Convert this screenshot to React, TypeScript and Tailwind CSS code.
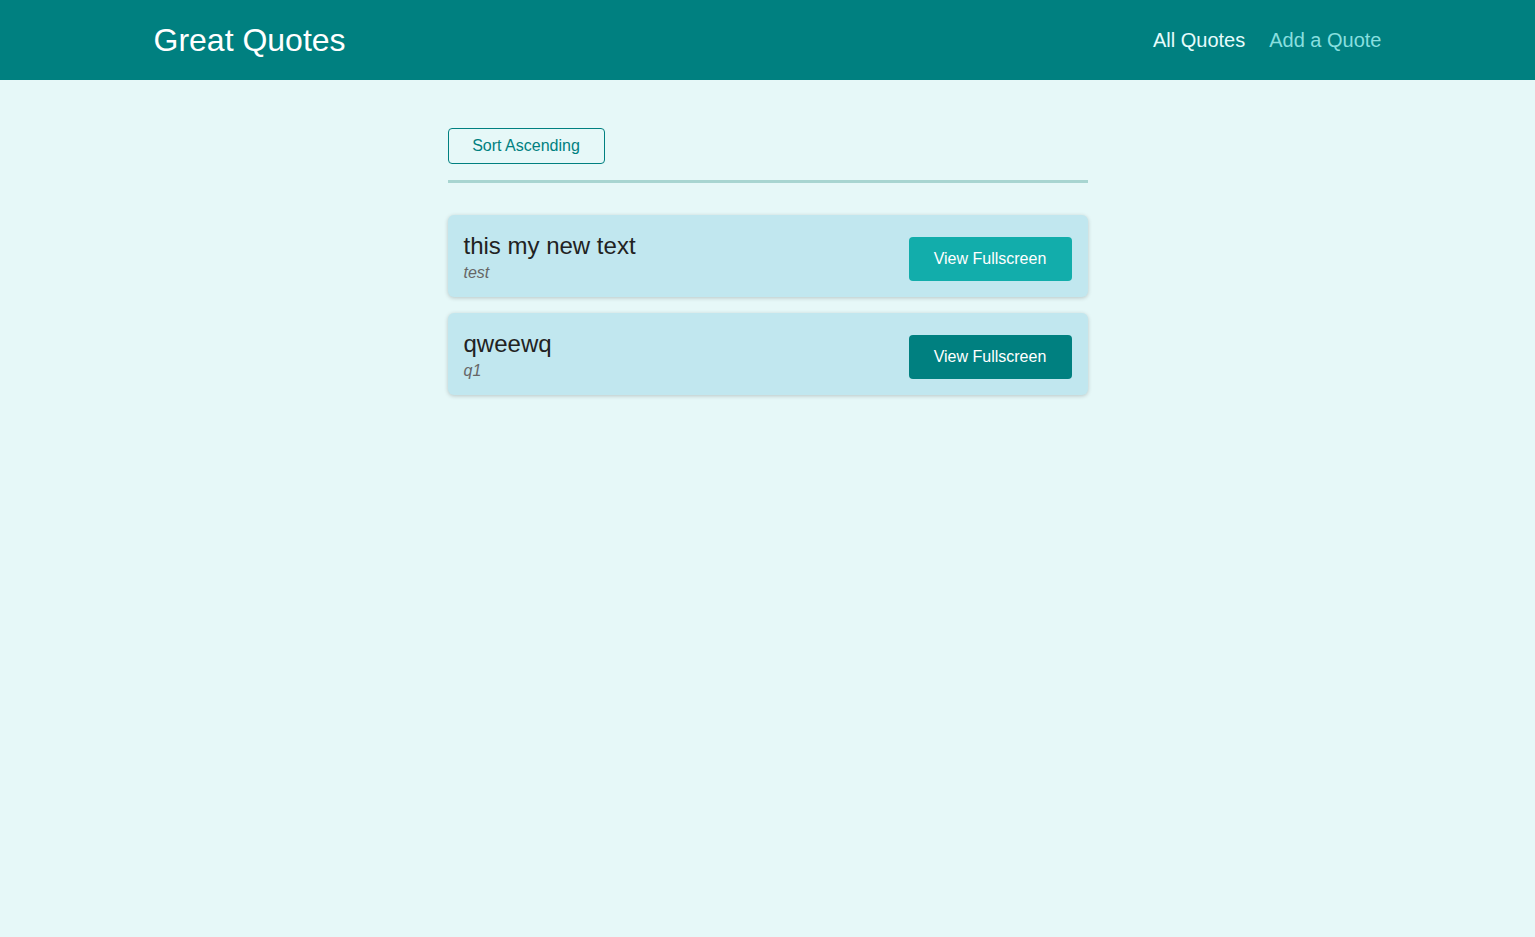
const quotes = [
  { id: 'q1', text: 'this my new text', author: 'test', hover: true },
  { id: 'q2', text: 'qweewq', author: 'q1', hover: false },
];

export default function App() {
  return (
    <div className="min-h-[937px] bg-[#e6f8f8] font-['Liberation_Sans',Arial,sans-serif]">
      <header className="flex h-20 items-center justify-between bg-[#008080] px-[10%]">
        <div className="text-[32px] text-white">Great Quotes</div>
        <nav className="flex items-center gap-6 text-xl">
          <a className="text-[#e6fcfc]">All Quotes</a>
          <a className="text-[#88dfdf]">Add a Quote</a>
        </nav>
      </header>

      <main className="mx-auto mt-12 w-[640px]">
        <div className="border-b-[3px] border-[#a8d5d1] pb-4">
          <button className="h-9 w-[157px] rounded border border-[#008080] bg-transparent text-base text-[#008080]">
            Sort Ascending
          </button>
        </div>

        <ul className="mt-8 flex flex-col gap-4">
          {quotes.map((q) => (
            <li
              key={q.id}
              className="flex h-[82px] items-center justify-between rounded-md bg-[#c1e7ef] px-4 pt-[6px] shadow-[0_1px_4px_rgba(0,0,0,0.2)]"
            >
              <figure className="flex flex-col">
                <blockquote className="text-2xl leading-6 text-[#222]">{q.text}</blockquote>
                <figcaption className="mt-[3px] text-base italic text-[#666]">{q.author}</figcaption>
              </figure>
              <a
                className={`flex h-11 w-[163px] items-center justify-center rounded text-base text-white ${
                  q.hover ? 'bg-[#12adab]' : 'bg-[#008080]'
                }`}
              >
                View Fullscreen
              </a>
            </li>
          ))}
        </ul>
      </main>
    </div>
  );
}
